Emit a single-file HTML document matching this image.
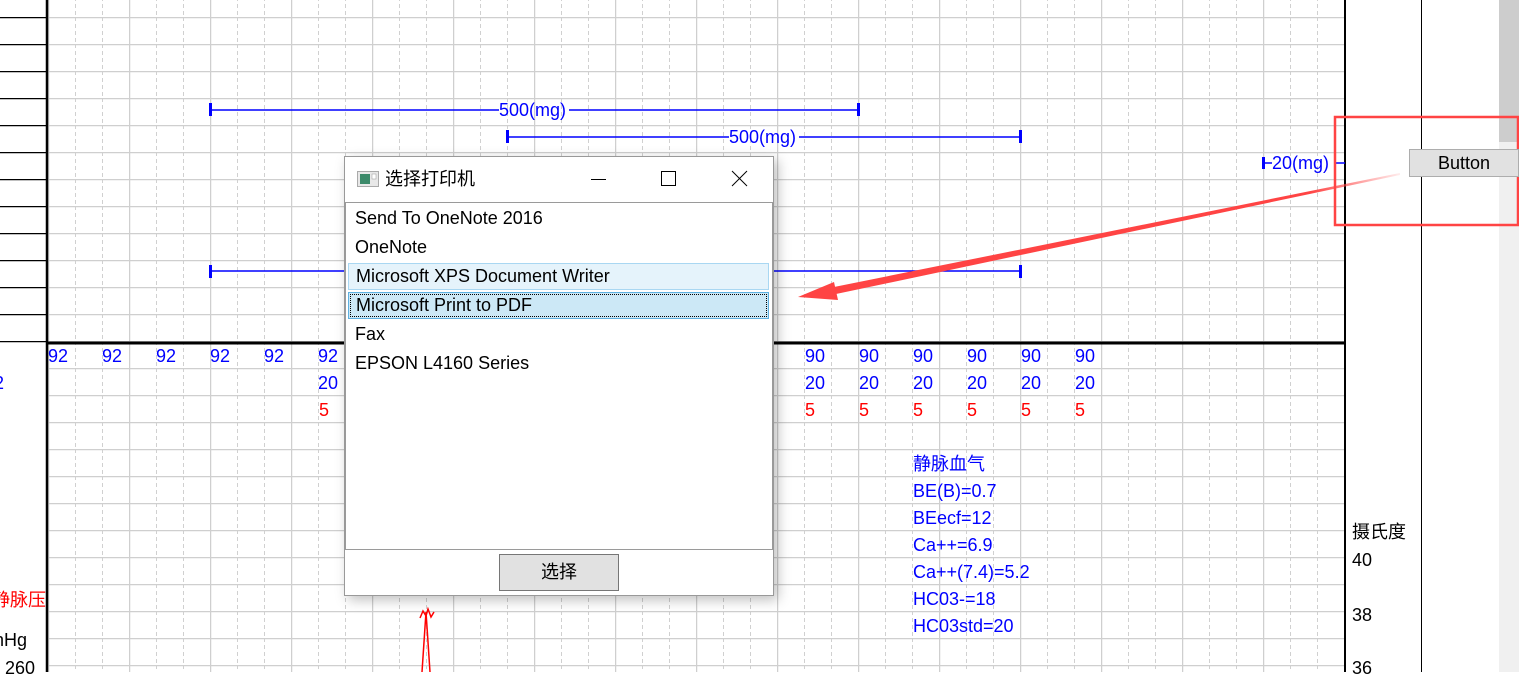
<!DOCTYPE html>
<html><head><meta charset="utf-8"><style>
body{margin:0;width:1519px;height:672px;overflow:hidden;background:#fff;font-family:"Liberation Sans","Noto Sans CJK SC",sans-serif;position:relative}
.t{position:absolute;font-size:18px;line-height:20px;white-space:nowrap}
.b{color:#0000ff}.r{color:#ff0000}
#dlg{position:absolute;left:344px;top:156px;width:428px;height:438px;background:#fff;border:1px solid #999;box-shadow:4px 4px 12px rgba(0,0,0,.25)}
.it{position:absolute;left:1px;width:424px;height:27px;font-size:18px;line-height:27px;padding-left:8px;box-sizing:border-box}
</style></head><body>
<svg width="1519" height="672" style="position:absolute;left:0;top:0">
<defs>
<pattern id="g" x="48" y="17" width="81" height="27" patternUnits="userSpaceOnUse">
<line x1="0.5" y1="0" x2="0.5" y2="27" stroke="#cfcfcf" stroke-width="1.5"/>
<line x1="27.5" y1="0" x2="27.5" y2="27" stroke="#d0d0d0" stroke-width="1" stroke-dasharray="4,3"/>
<line x1="54.5" y1="0" x2="54.5" y2="27" stroke="#d0d0d0" stroke-width="1" stroke-dasharray="4,3"/>
<line x1="0" y1="0.5" x2="81" y2="0.5" stroke="#cfcfcf" stroke-width="1.5"/>
</pattern>
<pattern id="h" x="0" y="17" width="46" height="27" patternUnits="userSpaceOnUse">
<line x1="0" y1="0.5" x2="46" y2="0.5" stroke="#000" stroke-width="1.5"/>
</pattern>
<linearGradient id="ag" x1="1400" y1="0" x2="798" y2="0" gradientUnits="userSpaceOnUse"><stop offset="0" stop-color="#f44" stop-opacity="0.1"/><stop offset="0.15" stop-color="#f44"/><stop offset="1" stop-color="#f44"/></linearGradient>
</defs>
<rect x="48" y="0" width="1297" height="672" fill="url(#g)"/>
<rect x="0" y="0" width="46" height="343" fill="url(#h)"/>
<line x1="47" y1="0" x2="47" y2="672" stroke="#000" stroke-width="2.5"/>
<line x1="48" y1="343" x2="1345" y2="343" stroke="#000" stroke-width="3"/>
<line x1="1345" y1="0" x2="1345" y2="672" stroke="#000" stroke-width="2"/>
<line x1="1421.5" y1="0" x2="1421.5" y2="672" stroke="#000" stroke-width="2"/>
<rect x="1346" y="0" width="75" height="672" fill="#fff"/>
<rect x="1422" y="0" width="77" height="672" fill="#fff"/>
<rect x="1499" y="0" width="20" height="672" fill="#f0f0f0"/>
<rect x="1499" y="0" width="20" height="142" fill="#cdcdcd"/>
<g stroke="#0000ff" stroke-width="1.5">
<line x1="210" y1="110" x2="499" y2="110"/><line x1="569" y1="110" x2="858" y2="110"/>
<line x1="507" y1="137" x2="729" y2="137"/><line x1="799" y1="137" x2="1020" y2="137"/>
<line x1="210" y1="271" x2="1020" y2="271"/>
<line x1="1334" y1="163" x2="1345" y2="163"/>
</g>
<g fill="#0000ff">
<rect x="209" y="103" width="3" height="13"/><rect x="857" y="103" width="3" height="13"/>
<rect x="506" y="130" width="3" height="13"/><rect x="1019" y="130" width="3" height="13"/>
<rect x="209" y="265" width="3" height="13"/><rect x="1019" y="265" width="3" height="13"/>
<rect x="1262" y="157" width="3" height="12"/>
</g>
<line x1="1264" y1="163" x2="1272" y2="163" stroke="#0000ff" stroke-width="1.5"/>
<polyline points="420,618 423,611 426,616 428,609 431,617 434,612" fill="none" stroke="#f00" stroke-width="1.5"/>
<polyline points="422,672 426,612 430,672" fill="none" stroke="#f00" stroke-width="1.5"/>
<polygon points="1400,173 1400,175 836,294 834,287" fill="url(#ag)"/>
<polygon points="798,297 834,282 838,300" fill="#f44"/>
<rect x="1335" y="117" width="183" height="108" fill="none" stroke="#f44" stroke-width="2.5"/>
</svg>
<div class="t b" style="left:499px;top:100px">500(mg)</div>
<div class="t b" style="left:729px;top:127px">500(mg)</div>
<div class="t b" style="left:1272px;top:153px">20(mg)</div>
<div style="position:absolute;left:1409px;top:149px;width:108px;height:26px;background:#e1e1e1;border:1px solid #adadad;font-size:18px;line-height:26px;text-align:center">Button</div>
<div class="t b" style="left:48px;top:346px">92</div><div class="t b" style="left:102px;top:346px">92</div><div class="t b" style="left:156px;top:346px">92</div><div class="t b" style="left:210px;top:346px">92</div><div class="t b" style="left:264px;top:346px">92</div><div class="t b" style="left:318px;top:346px">92</div>
<div class="t b" style="left:-6px;top:373px">2</div>
<div class="t b" style="left:318px;top:373px">20</div><div class="t r" style="left:319px;top:400px">5</div>
<div class="t b" style="left:805px;top:346px">90</div><div class="t b" style="left:859px;top:346px">90</div><div class="t b" style="left:913px;top:346px">90</div><div class="t b" style="left:967px;top:346px">90</div><div class="t b" style="left:1021px;top:346px">90</div><div class="t b" style="left:1075px;top:346px">90</div>
<div class="t b" style="left:805px;top:373px">20</div><div class="t b" style="left:859px;top:373px">20</div><div class="t b" style="left:913px;top:373px">20</div><div class="t b" style="left:967px;top:373px">20</div><div class="t b" style="left:1021px;top:373px">20</div><div class="t b" style="left:1075px;top:373px">20</div>
<div class="t r" style="left:805px;top:400px">5</div><div class="t r" style="left:859px;top:400px">5</div><div class="t r" style="left:913px;top:400px">5</div><div class="t r" style="left:967px;top:400px">5</div><div class="t r" style="left:1021px;top:400px">5</div><div class="t r" style="left:1075px;top:400px">5</div>
<div class="t b" style="left:913px;top:454px">静脉血气</div>
<div class="t b" style="left:913px;top:481px">BE(B)=0.7</div>
<div class="t b" style="left:913px;top:508px">BEecf=12</div>
<div class="t b" style="left:913px;top:535px">Ca++=6.9</div>
<div class="t b" style="left:913px;top:562px">Ca++(7.4)=5.2</div>
<div class="t b" style="left:913px;top:589px">HC03-=18</div>
<div class="t b" style="left:913px;top:616px">HC03std=20</div>
<div class="t r" style="left:-8px;top:590px">静脉压</div>
<div class="t" style="left:-6px;top:630px">nHg</div>
<div class="t" style="left:5px;top:658px">260</div>
<div class="t" style="left:1352px;top:522px">摄氏度</div>
<div class="t" style="left:1352px;top:550px">40</div>
<div class="t" style="left:1352px;top:605px">38</div>
<div class="t" style="left:1352px;top:658px">36</div>
<div id="dlg">
<svg width="22" height="16" style="position:absolute;left:12px;top:14px"><rect x="0.5" y="0.5" width="21" height="15" fill="#e8e8e8" stroke="#aaa"/><rect x="3" y="3" width="10" height="10" fill="#3c8a6a"/><rect x="15" y="3" width="4" height="5" fill="#fff" stroke="#999" stroke-width=".5"/></svg>
<div style="position:absolute;left:40px;top:11px;font-size:18px;line-height:22px">选择打印机</div>
<svg width="160" height="20" style="position:absolute;left:244px;top:12px" fill="none" stroke="#000" stroke-width="1"><line x1="2" y1="10.5" x2="17" y2="10.5"/><rect x="72.5" y="2.5" width="14" height="14"/><line x1="143" y1="2" x2="158" y2="17"/><line x1="158" y1="2" x2="143" y2="17"/></svg>
<div style="position:absolute;left:0px;top:45px;width:426px;height:346px;border:1px solid #9a9a9a">
<div class="it" style="top:2px">Send To OneNote 2016</div>
<div class="it" style="top:31px">OneNote</div>
<div class="it" style="top:60px;background:#e5f3fb;border:1px solid #a9d7f2;padding-left:7px;line-height:25px;left:2px;width:421px">Microsoft XPS Document Writer</div>
<div class="it" style="top:89px;background:#cce8f6;border:1px solid #5eb0e0;padding-left:7px;line-height:25px;left:2px;width:421px"><div style="position:absolute;inset:1px;border:1px dotted #000"></div>Microsoft Print to PDF</div>
<div class="it" style="top:118px">Fax</div>
<div class="it" style="top:147px">EPSON L4160 Series</div>
</div>
<div style="position:absolute;left:154px;top:397px;width:120px;height:37px;background:#e1e1e1;border:1px solid #767676;box-sizing:border-box;font-size:18px;line-height:35px;text-align:center">选择</div>
</div>
</body></html>
